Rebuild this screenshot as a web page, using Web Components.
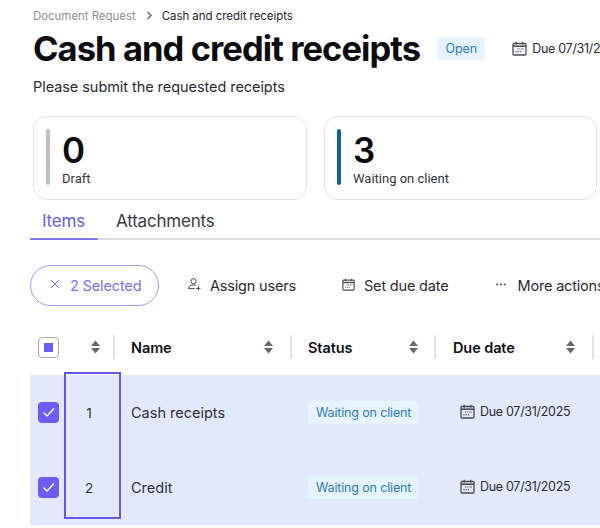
<!DOCTYPE html>
<html><head><meta charset="utf-8">
<style>
html,body{margin:0;padding:0;background:#fff;overflow:hidden}
body{width:600px;height:528px;font-family:Inter,"Liberation Sans",sans-serif;color:#2b2b33}
</style></head><body>
<x-page></x-page>
<template id="cal"><svg width="100%" height="100%" viewBox="0 0 15 15" fill="none" stroke="currentColor"><rect x="1" y="2.5" width="13" height="11.5" rx="1" stroke-width="1.3"/><path d="M1 5.2h13" stroke-width="1.6"/><path d="M4.2 .8v2.8M10.8 .8v2.8" stroke-width="1.3"/><path d="M5 8h1.2M7.2 8h1.2M9.4 8h1.2M11.2 8h.8M3.4 10.6h1.2M5.6 10.6h1.2M7.8 10.6h1.2" stroke-width="1.1"/></svg></template>
<script>
const calSvg=document.getElementById('cal').innerHTML;
function def(name,css,html){customElements.define(name,class extends HTMLElement{constructor(){super();const r=this.attachShadow({mode:'open'});r.innerHTML='<style>'+css+'</style>'+html;}})}
def('x-cal',':host{display:inline-flex;flex:none;width:var(--s,15px);height:var(--s,15px);color:#4a4b55}',calSvg);
def('x-badge',':host{display:inline-flex;align-items:center;justify-content:center;height:23px;padding:0 8px;border-radius:4px;background:#e6f4ff;color:#2b7cb8;font-size:12.5px;letter-spacing:-.15px;white-space:nowrap}','<slot></slot>');
def('x-due',':host{display:inline-flex;align-items:center;gap:5px;font-size:12.5px;color:#2b2b33;white-space:nowrap;letter-spacing:-.3px}','<x-cal></x-cal><slot></slot>');
def('x-stat',`:host{display:flex;box-sizing:border-box;height:84px;border:1px solid #e3e3e6;border-radius:14px;padding:12px;gap:12px;background:#fff;flex:none}
.bar{width:4px;height:56px;border-radius:2px;background:var(--c,#bcc0c4);flex:none}
.n{font-size:35px;font-weight:600;line-height:36px;color:#0c0c10;margin-top:3px;letter-spacing:-1px}
.l{font-size:13px;line-height:17px;color:#33333b;font-family:Roboto,sans-serif;margin-top:2px}`,
'<div class="bar"></div><div><div class="n"><slot name="n"></slot></div><div class="l"><slot name="l"></slot></div></div>');
def('x-action',':host{display:inline-flex;align-items:center;gap:9px;font-size:14.5px;color:#2b2b33;white-space:nowrap;letter-spacing:-.18px;--s:13px}::slotted(*){flex:none;margin-bottom:3px}','<slot name="i"></slot><span><slot></slot></span>');
def('x-sort',':host{display:inline-flex;flex:none;width:9px;height:14px;color:#66666c}','<svg width="9" height="14" viewBox="0 0 9 14" fill="currentColor"><path d="M4.5 .5L9 6H0zM4.5 13.5L0 8h9z"/></svg>');
def('x-check',':host{display:inline-flex;box-sizing:border-box;width:21px;height:21px;border-radius:4px;background:#6a5cf6;align-items:center;justify-content:center;flex:none}','<svg width="13" height="11" viewBox="0 0 13 11" fill="none" stroke="#fff" stroke-width="1.4"><path d="M1.5 5.5l3.5 3.5 7-7.5"/></svg>');
def('x-indet',':host{display:inline-flex;box-sizing:border-box;width:21px;height:21px;border-radius:4px;border:1px solid #a9a9b0;align-items:center;justify-content:center;flex:none;background:#fff}i{display:block;width:9px;height:9px;background:#6a5cf6}','<i></i>');
def('x-head',`:host{display:flex;align-items:center;box-sizing:border-box;height:24px;font-weight:600;font-size:14.5px;color:#111116;letter-spacing:-.1px;border-right:2px solid #e2e2e4;flex:none;justify-content:space-between}`,'<span><slot></slot></span><x-sort></x-sort>');
customElements.define('x-row',class extends HTMLElement{constructor(){super();const r=this.attachShadow({mode:'open'});r.innerHTML=`<style>:host{display:grid;grid-template-columns:26px 50px 194px 152px 1fr;align-items:center;height:75px;font-size:14.5px;color:#2f2f37;padding-left:8px}
.num{text-align:center;font-size:13.5px}.name{padding-left:17px}</style><x-check></x-check><div class="num">${this.getAttribute('n')}</div><div class="name">${this.getAttribute('name')}</div><div><x-badge>Waiting on client</x-badge></div><div><x-due>Due 07/31/2025</x-due></div>`;}});
def('x-page',`:host{display:block;position:relative;width:600px;height:528px;overflow:hidden}
.wrap{padding-left:33px;width:800px}
.crumb{display:flex;align-items:center;height:12px;margin-top:10px;font-size:11.5px;color:#8f8f94;letter-spacing:-.05px;white-space:nowrap}
.crumb b{font-weight:400;color:#26262c}
.crumb svg{margin:0 9px 2px 10px}
.titler{display:flex;align-items:center;margin-top:9px;height:36px}
h1{margin:0;font-size:34.5px;line-height:36px;font-weight:700;color:#0b0b10;letter-spacing:-.92px;white-space:nowrap}
.titler x-badge{margin-left:17px;margin-top:-2px;width:32px}
.titler x-due{margin-left:27px;margin-top:-1px}
.sub{margin:10px 0 0;font-size:14.5px;line-height:20px;color:#2b2b33;letter-spacing:-.06px}
.cards{display:flex;gap:17px;margin-top:19px}
.c1{width:274px}.c2{width:273px;--c:#0f5f9c}
.tabs{display:flex;margin:8px 0 0 -3px;width:570px;border-bottom:2px solid #dcdcdf;height:30px}
.tab{box-sizing:border-box;height:32px;padding:2px 12px 0;font-size:17px;letter-spacing:-.2px;color:#3b3b43;line-height:22px}
.tab.on{color:#6a5cf6;border-bottom:2px solid #8279f3;width:68px;padding-left:12px}
.tab+.tab{margin-left:6px}
.bar{display:flex;align-items:center;height:41px;margin:25px 0 0 -3px}
.pill{display:flex;align-items:center;box-sizing:border-box;width:129px;height:41px;border:1px solid #9d95f6;border-radius:21px;padding-left:19px;gap:10px;color:#7a70f6;font-size:14.5px;letter-spacing:-.15px;white-space:nowrap}
.pill svg{margin-bottom:3px}
.a1{margin-left:29px}
.a2{margin-left:46px}
.a3{margin-left:48px;gap:11px}
.thead{display:flex;align-items:center;height:24px;margin:29px 0 0 -3px;padding-left:8px}
.rows{margin:16px 0 0 -3px;background:#e3e9fd;height:150px;width:570px;overflow:hidden}
.box{position:absolute;left:64px;top:372px;width:57px;height:147px;box-sizing:border-box;border:2px solid #6258ee}`,
`<div class="wrap">
<div class="crumb"><span>Document Request</span><svg width="7" height="9" viewBox="0 0 7 9" fill="none" stroke="#5c5c62" stroke-width="1.3"><path d="M1.5 1l3.5 3.5L1.5 8"/></svg><b>Cash and credit receipts</b></div>
<div class="titler"><h1>Cash and credit receipts</h1><x-badge>Open</x-badge><x-due>Due 07/31/2025</x-due></div>
<p class="sub">Please submit the requested receipts</p>
<div class="cards"><x-stat class="c1"><span slot="n">0</span><span slot="l">Draft</span></x-stat><x-stat class="c2"><span slot="n">3</span><span slot="l">Waiting on client</span></x-stat></div>
<div class="tabs"><div class="tab on">Items</div><div class="tab">Attachments</div></div>
<div class="bar"><div class="pill"><svg width="10" height="10" viewBox="0 0 10 10" stroke="#7a70f6" stroke-width="1"><path d="M1 1l8 8M9 1l-8 8"/></svg><span>2 Selected</span></div>
<x-action class="a1"><svg slot="i" width="13" height="13" viewBox="0 0 13 13" fill="none" stroke="#4a4b55" stroke-width="1"><circle cx="5.5" cy="3.2" r="2.6"/><path d="M.7 10.6c0-2.6 1.8-3.6 4.8-3.6 1 0 1.8.1 2.5.4M.7 10.6h6M10.3 8.2v4.4M8.1 10.4h4.4"/></svg>Assign users</x-action>
<x-action class="a2"><x-cal slot="i"></x-cal>Set due date</x-action>
<x-action class="a3"><svg slot="i" width="10" height="3" viewBox="0 0 10 3" fill="#4a4b55"><circle cx="1.2" cy="1.5" r="1"/><circle cx="5" cy="1.5" r="1"/><circle cx="8.8" cy="1.5" r="1"/></svg>More actions</x-action></div>
<div class="thead"><x-indet></x-indet>
<x-head style="width:56px;padding:0 13px 0 0;justify-content:flex-end"></x-head>
<x-head style="width:177px;padding:0 17px 0 16px">Name</x-head>
<x-head style="width:144px;padding:0 16px 0 16px">Status</x-head>
<x-head style="width:158px;padding:0 17px 0 17px">Due date</x-head></div>
<div class="rows"><x-row n="1" name="Cash receipts"></x-row><x-row n="2" name="Credit"></x-row></div>
</div><div class="box"></div>`);
</script>
</body></html>
